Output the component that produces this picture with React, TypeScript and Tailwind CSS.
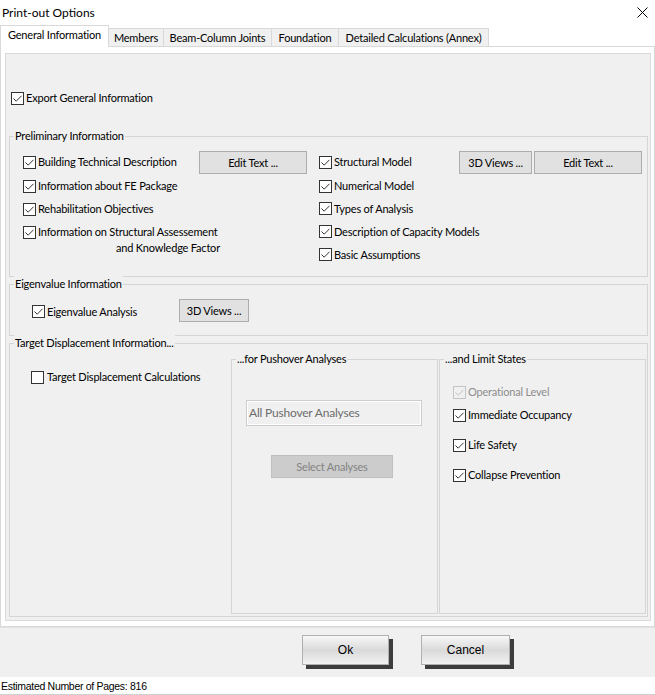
import clsx from "clsx"
import type { ReactNode } from "react"

const CheckBox = ({ checked = true, disabled = false }: { checked?: boolean; disabled?: boolean }) => (
  <span
    className={clsx(
      "flex h-[13px] w-[13px] shrink-0 items-center justify-center border",
      disabled ? "border-[#c4c4c4] bg-[#f0f0f0]" : "border-[#333333] bg-white"
    )}
  >
    {checked && (
      <svg width="11" height="11" viewBox="0 0 11 11">
        <path
          d="M1.5 5.5 L4.2 8.2 L9.5 2.8"
          fill="none"
          stroke={disabled ? "#c4c4c4" : "#333333"}
          strokeWidth="1"
        />
      </svg>
    )}
  </span>
)

const CheckItem = ({
  label,
  checked = true,
  disabled = false,
  className,
}: {
  label: string
  checked?: boolean
  disabled?: boolean
  className?: string
}) => (
  <div className={clsx("flex h-[16px] items-center gap-[2px]", className)}>
    <CheckBox checked={checked} disabled={disabled} />
    <span className={clsx("whitespace-nowrap", disabled && "text-[#8d8d8d]")}>{label}</span>
  </div>
)

const Btn = ({ children, className }: { children: ReactNode; className?: string }) => (
  <button
    className={clsx(
      "flex h-[23px] shrink-0 items-center justify-center border border-[#adadad] bg-[#e1e1e1] text-black",
      className
    )}
  >
    {children}
  </button>
)

const Group = ({ title, className, children }: { title: string; className?: string; children?: ReactNode }) => (
  <div className={clsx("relative border border-[#d5d5d5]", className)}>
    <span className="absolute -top-[9px] left-[4px] bg-[#f0f0f0] px-px leading-[16px] whitespace-nowrap">{title}</span>
    {children}
  </div>
)

const tabs = ["Members", "Beam-Column Joints", "Foundation", "Detailed Calculations (Annex)"]
const tabWidths = ["w-[55px]", "w-[108px]", "w-[67px]", "w-[150px]"]

const DialogButton = ({ children, className }: { children: ReactNode; className?: string }) => (
  <button
    className={clsx(
      "flex h-[30px] items-center justify-center border border-[#b0b0b0] bg-gradient-to-b from-[#f8f8f8] via-[#d9d9d9] to-[#f2f2f2] text-[12px] tracking-normal font-['Liberation_Sans',sans-serif] shadow-[4px_4px_0_#3d3d3d]",
      className
    )}
  >
    {children}
  </button>
)

export default function App() {
  return (
    <div className="flex h-[695px] w-[655px] flex-col overflow-hidden bg-white font-['Lato',sans-serif] text-[11px] leading-[16px] tracking-[-0.2px] text-black">
      {/* title bar */}
      <div className="flex h-[25px] shrink-0 items-center justify-between pl-[2px] pr-[7px]">
        <span className="text-[12px] tracking-normal">Print-out Options</span>
        <svg width="11" height="11" viewBox="0 0 11 11">
          <path d="M0.5 0.5 L10.5 10.5 M10.5 0.5 L0.5 10.5" stroke="#000" strokeWidth="1" />
        </svg>
      </div>

      {/* tabs */}
      <div className="flex h-[21px] shrink-0 items-end">
        <div className="relative z-10 -mb-px flex h-[22px] w-[109px] items-start justify-center border-x border-t border-[#d9d9d9] bg-white pt-[1px]">
          General Information
        </div>
        {tabs.map((t, i) => (
          <div
            key={t}
            className={clsx(
              "flex h-[18px] items-center justify-center border-r border-t border-[#d9d9d9] bg-[#f0f0f0]",
              tabWidths[i]
            )}
          >
            {t}
          </div>
        ))}
      </div>

      {/* tab page */}
      <div className="flex h-[581px] shrink-0 flex-col border border-[#d9d9d9] bg-white pb-[5px] pl-[4px] pr-[3px] pt-[6px]">
        <div className="flex flex-1 flex-col border border-[#dadada] bg-[#f0f0f0] pb-[3px]">
          <CheckItem label="Export General Information" className="ml-[5px] mt-[36px]" />

          <Group title="Preliminary Information" className="ml-[3px] mr-[2px] mt-[30px] h-[141px] pl-[13px] pt-[14px]">
            <div className="flex">
              <div className="flex w-[296px] flex-col">
                <div className="flex h-[24px] items-start">
                  <CheckItem label="Building Technical Description" className="mt-[3px] w-[176px]" />
                  <Btn className="w-[108px]">Edit Text ...</Btn>
                </div>
                <CheckItem label="Information about FE Package" className="h-[22px]" />
                <CheckItem label="Rehabilitation Objectives" className="h-[24px]" />
                <div className="flex items-start gap-[2px] pt-[3px]">
                  <span className="mt-[2px]">
                    <CheckBox />
                  </span>
                  <div className="flex flex-col">
                    <span className="whitespace-nowrap">Information on Structural Assessement</span>
                    <span className="whitespace-nowrap pl-[78px]">and Knowledge Factor</span>
                  </div>
                </div>
              </div>
              <div className="flex flex-col">
                <div className="flex h-[24px] items-start">
                  <CheckItem label="Structural Model" className="mt-[3px] w-[140px]" />
                  <Btn className="w-[73px]">3D Views ...</Btn>
                  <Btn className="ml-[2px] w-[108px]">Edit Text ...</Btn>
                </div>
                <CheckItem label="Numerical Model" className="h-[22px]" />
                <CheckItem label="Types of Analysis" className="h-[23px]" />
                <CheckItem label="Description of Capacity Models" className="h-[23px]" />
                <CheckItem label="Basic Assumptions" className="h-[23px]" />
              </div>
            </div>
          </Group>

          <Group title="Eigenvalue Information" className="ml-[3px] mr-[2px] mt-[7px] h-[52px] pl-[22px] pt-[14px]">
            <div className="flex h-[23px] items-center">
              <CheckItem label="Eigenvalue Analysis" className="mt-[2px] w-[147px]" />
              <Btn className="w-[70px]">3D Views ...</Btn>
            </div>
          </Group>

          <Group title="Target Displacement Information..." className="ml-[3px] mr-[2px] mt-[7px] h-[274px] pb-[2px] pt-[15px]">
            <div className="flex h-full">
              <div className="w-[221px] pl-[21px] pt-[10px]">
                <CheckItem label="Target Displacement Calculations" checked={false} className="gap-[3px]" />
              </div>

              <Group title="...for Pushover Analyses" className="w-[207px]">
                <div className="ml-[14px] mt-[40px] flex h-[26px] w-[176px] items-center border border-[#cccccc] pl-[2px] text-[12px] text-[#6d6d6d] shadow-[inset_0_0_0_1px_#ffffff]">
                  All Pushover Analyses
                </div>
                <div className="ml-[39px] mt-[29px] flex h-[23px] w-[122px] items-center justify-center border border-[#bfbfbf] bg-[#cccccc] text-[#838383]">
                  Select Analyses
                </div>
              </Group>

              <Group title="...and Limit States" className="ml-px w-[207px] pl-[13px]">
                <CheckItem label="Operational Level" disabled className="mt-[24px]" />
                <CheckItem label="Immediate Occupancy" className="mt-[7px]" />
                <CheckItem label="Life Safety" className="mt-[14px]" />
                <CheckItem label="Collapse Prevention" className="mt-[14px]" />
              </Group>
            </div>
          </Group>
        </div>
      </div>

      {/* footer */}
      <div className="flex h-[50px] shrink-0 border-t border-[#e3e3e3] bg-[#f0f0f0] pt-[7px]">
        <DialogButton className="ml-[302px] w-[87px]">Ok</DialogButton>
        <DialogButton className="ml-[32px] w-[89px]">Cancel</DialogButton>
      </div>

      {/* status bar */}
      <div className="flex h-[18px] shrink-0 items-center border-b border-[#d0d0d0] pl-px font-['Liberation_Sans',sans-serif] text-[10.5px] tracking-[-0.3px]">
        Estimated Number of Pages: 816
      </div>
    </div>
  )
}
